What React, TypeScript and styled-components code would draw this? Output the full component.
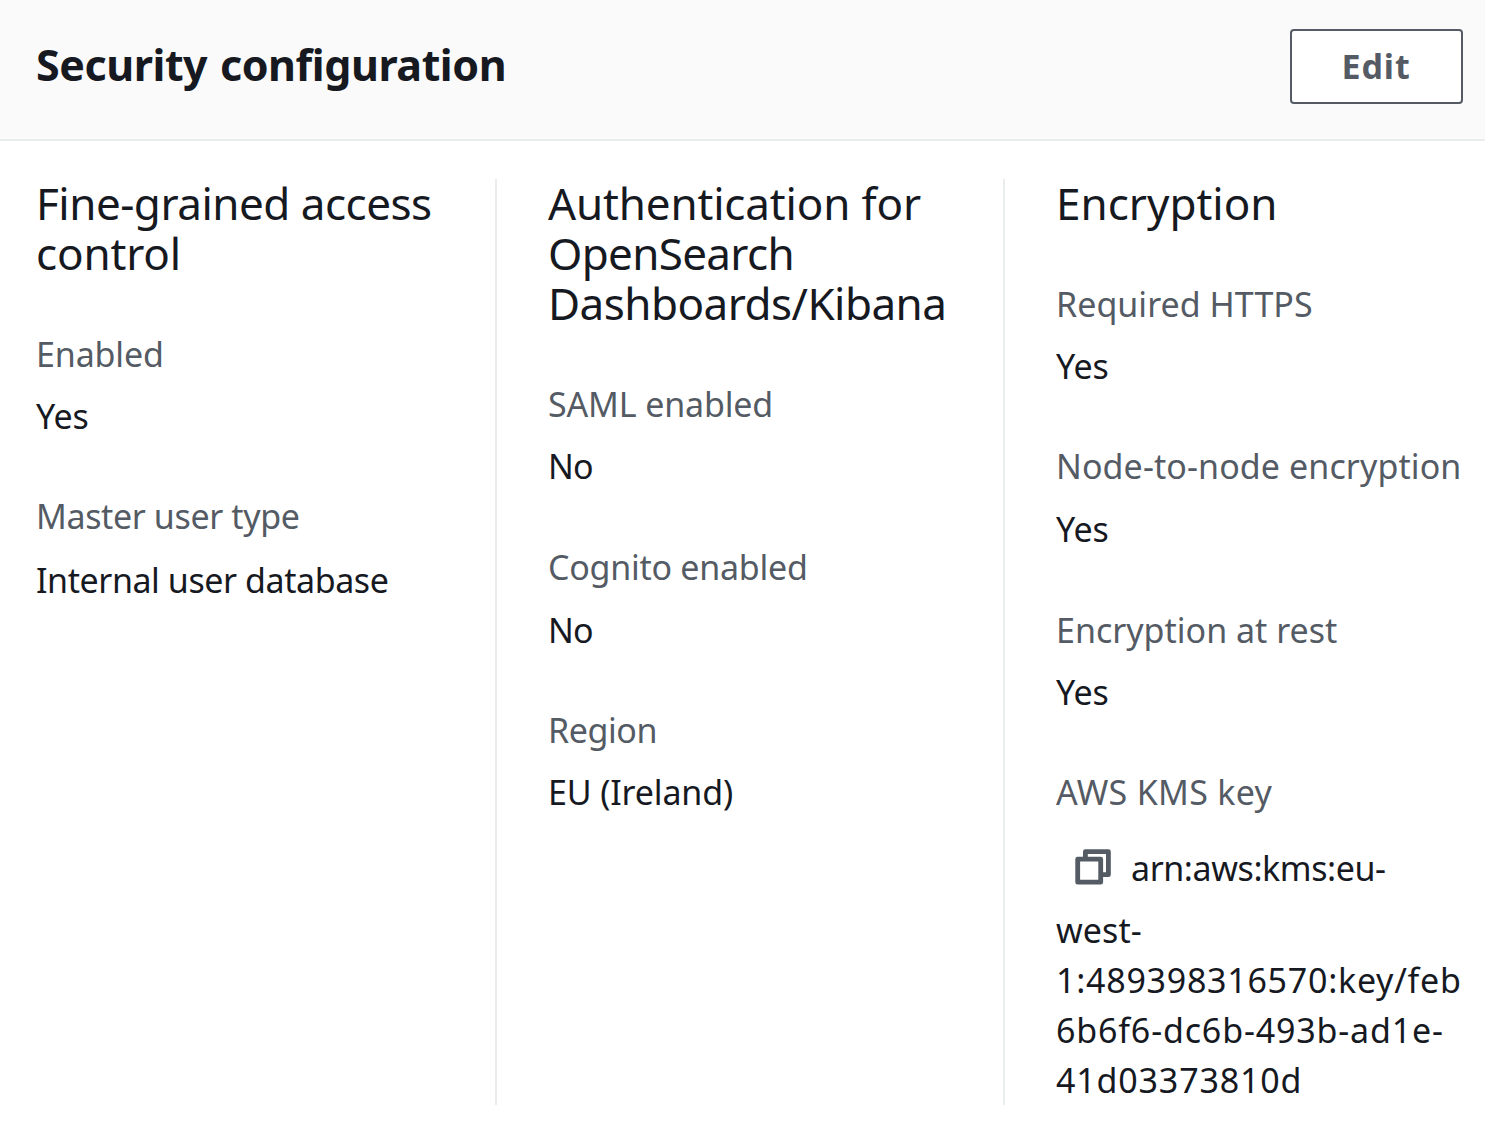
import React from "react";
import styled, { createGlobalStyle } from "styled-components";

const GlobalStyle = createGlobalStyle`
  * { box-sizing: border-box; }
  body {
    margin: 0;
    background: #ffffff;
    color: #16191f;
    font-family: "Noto Sans", "Open Sans", sans-serif;
  }
`;

const Panel = styled.section`
  width: 1485px;
  height: 1125px;
  overflow: hidden;
`;

const Header = styled.header`
  display: flex;
  justify-content: space-between;
  align-items: flex-start;
  height: 141px;
  padding: 29px 22px 0 36px;
  background: #fafafa;
  border-bottom: 2px solid #eaeded;
`;

const Title = styled.h2`
  margin: 11px 0 0;
  font-size: 43px;
  line-height: 50px;
  font-weight: 700;
  letter-spacing: -0.45px;
  word-spacing: 2px;
`;

const EditButton = styled.button`
  width: 173px;
  height: 75px;
  padding: 0 1px 2px 0;
  border: 2px solid #545b64;
  border-radius: 4px;
  background: #ffffff;
  color: #545b64;
  font: 700 34px/50px "Noto Sans", "Open Sans", sans-serif;
  letter-spacing: 0.93px;
`;

const Columns = styled.div`
  display: grid;
  grid-template-columns: 495px 508px 482px;
  grid-template-rows: 926px;
  margin-top: 38px;
`;

const Column = styled.div<{ $divided?: boolean }>`
  padding-left: ${(p) => (p.$divided ? 51 : 36)}px;
  border-left: ${(p) => (p.$divided ? "2px solid #eaeded" : "none")};
`;

const Heading = styled.h3`
  margin: -1px 0 51px;
  font-size: 44px;
  line-height: 50px;
  font-weight: 400;
`;

const Field = styled.div<{ $after?: number }>`
  margin-bottom: ${(p) => p.$after ?? 50}px;
  font-size: 34px;
  line-height: 50px;
`;

const Label = styled.div<{ $gap?: number }>`
  margin-bottom: ${(p) => p.$gap ?? 12}px;
  color: #545b64;
`;

const Value = styled.div`
  color: #16191f;
`;

const Line = styled.span<{ $track?: number }>`
  display: block;
  white-space: nowrap;
  letter-spacing: ${(p) => p.$track ?? 0}px;
`;

const CopyRow = styled.div`
  display: flex;
  align-items: center;
  gap: 20px;
  padding: 14px 0 12px 19px;
`;

const CopyIcon = styled.svg`
  display: block;
  flex: none;
  width: 36px;
  height: 36px;
  margin-bottom: 2px;
  fill: none;
  stroke: #545b64;
  stroke-width: 4.8;
  stroke-linejoin: round;
`;

type Text = { text: string; track?: number };
type FieldData = { label: Text; value: Text; gap?: number; after?: number };
type ColumnData = { heading: Text[]; fields: FieldData[] };

const yes: Text = { text: "Yes", track: -0.1 };
const no: Text = { text: "No", track: -0.8 };

const columns: ColumnData[] = [
  {
    heading: [
      { text: "Fine-grained access", track: -0.5 },
      { text: "control", track: -0.15 },
    ],
    fields: [
      { label: { text: "Enabled", track: -0.14 }, value: yes },
      {
        label: { text: "Master user type", track: -0.38 },
        value: { text: "Internal user database", track: -0.43 },
        gap: 14,
      },
    ],
  },
  {
    heading: [
      { text: "Authentication for", track: -0.16 },
      { text: "OpenSearch", track: -0.68 },
      { text: "Dashboards/Kibana", track: -0.53 },
    ],
    fields: [
      { label: { text: "SAML enabled", track: -0.15 }, value: no, after: 51 },
      { label: { text: "Cognito enabled", track: -0.26 }, value: no, gap: 13 },
      {
        label: { text: "Region", track: -0.42 },
        value: { text: "EU (Ireland)", track: -0.15 },
      },
    ],
  },
  {
    heading: [{ text: "Encryption", track: 0 }],
    fields: [
      { label: { text: "Required HTTPS", track: 0.03 }, value: yes },
      {
        label: { text: "Node-to-node encryption", track: 0.1 },
        value: yes,
        gap: 13,
        after: 51,
      },
      { label: { text: "Encryption at rest", track: 0 }, value: yes },
    ],
  },
];

const keyLines: Text[] = [
  { text: "west-", track: 0.1 },
  { text: "1:489398316570:key/feb", track: 0.73 },
  { text: "6b6f6-dc6b-493b-ad1e-", track: 0.84 },
  { text: "41d03373810d", track: 0.83 },
];

const TextLine = ({ text, track }: Text) => <Line $track={track}>{text}</Line>;

const KmsKey = () => (
  <Field>
    <Label>
      <TextLine text="AWS KMS key" track={0.3} />
    </Label>
    <Value>
      <CopyRow>
        <CopyIcon viewBox="0 0 36 36" aria-label="Copy">
          <path d="M10.4 9.5V2.7h23v23h-6" />
          <rect x="2.7" y="10.2" width="23" height="23" />
        </CopyIcon>
        <TextLine text="arn:aws:kms:eu-" track={-0.42} />
      </CopyRow>
      {keyLines.map((line) => (
        <TextLine key={line.text} {...line} />
      ))}
    </Value>
  </Field>
);

export default function App() {
  return (
    <Panel>
      <GlobalStyle />
      <Header>
        <Title>Security configuration</Title>
        <EditButton type="button">Edit</EditButton>
      </Header>
      <Columns>
        {columns.map((column, index) => (
          <Column key={column.heading[0].text} $divided={index > 0}>
            <Heading>
              {column.heading.map((line) => (
                <TextLine key={line.text} {...line} />
              ))}
            </Heading>
            {column.fields.map((field) => (
              <Field key={field.label.text} $after={field.after}>
                <Label $gap={field.gap}>
                  <TextLine {...field.label} />
                </Label>
                <Value>
                  <TextLine {...field.value} />
                </Value>
              </Field>
            ))}
            {index === 2 && <KmsKey />}
          </Column>
        ))}
      </Columns>
    </Panel>
  );
}
